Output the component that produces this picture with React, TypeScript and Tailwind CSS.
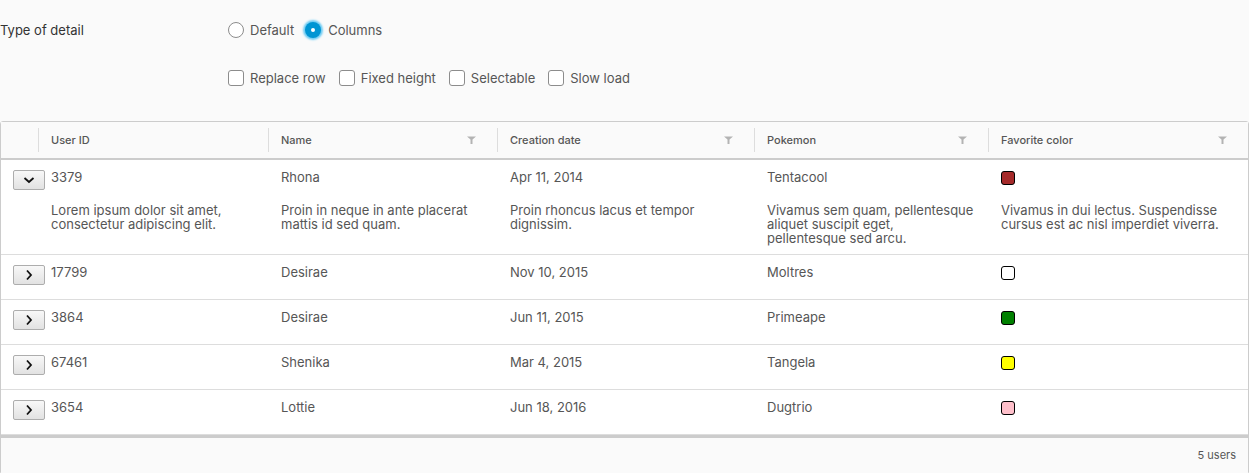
import { ReactNode } from "react";

type User = {
  id: string;
  name: string;
  date: string;
  pokemon: string;
  color: string;
  expanded?: boolean;
};

const users: User[] = [
  { id: "3379", name: "Rhona", date: "Apr 11, 2014", pokemon: "Tentacool", color: "bg-[#a52a2a]", expanded: true },
  { id: "17799", name: "Desirae", date: "Nov 10, 2015", pokemon: "Moltres", color: "bg-white" },
  { id: "3864", name: "Desirae", date: "Jun 11, 2015", pokemon: "Primeape", color: "bg-[#008000]" },
  { id: "67461", name: "Shenika", date: "Mar 4, 2015", pokemon: "Tangela", color: "bg-[#ffff00]" },
  { id: "3654", name: "Lottie", date: "Jun 18, 2016", pokemon: "Dugtrio", color: "bg-[#ffc0cb]" },
];

const details = [
  "Lorem ipsum dolor sit amet, consectetur adipiscing elit.",
  "Proin in neque in ante placerat mattis id sed quam.",
  "Proin rhoncus lacus et tempor dignissim.",
  "Vivamus sem quam, pellentesque aliquet suscipit eget, pellentesque sed arcu.",
  "Vivamus in dui lectus. Suspendisse cursus est ac nisl imperdiet viverra.",
];

const cols = "grid grid-cols-[37px_230px_229px_257px_234px_1fr]";

function FilterIcon() {
  return (
    <svg width="9" height="8" viewBox="0 0 9 8" className="shrink-0">
      <path d="M0 0.5h9L5.5 3.5V8h-2V3.5Z" fill="#b3b3b3" />
    </svg>
  );
}

function HeaderCell({ label, filter }: { label: string; filter?: boolean }) {
  return (
    <div className="flex items-center border-l border-[#ddd] my-[6px] pl-[12px] pr-[21px] justify-between h-[24px]">
      <span>{label}</span>
      {filter && <FilterIcon />}
    </div>
  );
}

function Cell({ children }: { children: ReactNode }) {
  return <div className="pl-[13px] pr-[12px]">{children}</div>;
}

function ExpandButton({ open }: { open?: boolean }) {
  return (
    <button className="ml-[12px] w-[32px] h-[20px] flex items-center justify-center rounded-[2px] border border-[#adadad] bg-gradient-to-b from-[#f8f8f8] to-[#e2e2e2]">
      <svg width="12" height="12" viewBox="0 0 12 12">
        {open ? (
          <path d="M1.5 4l4.5 4 4.5-4" fill="none" stroke="#111" strokeWidth="1.8" />
        ) : (
          <path d="M4 1.5l4 4.5-4 4.5" fill="none" stroke="#111" strokeWidth="1.8" />
        )}
      </svg>
    </button>
  );
}

export default function App() {
  return (
    <div className="w-[1249px] h-[473px] bg-[#fafafa] text-[13px] text-[#565656] font-['Inter',sans-serif] overflow-hidden">
      {/* Options */}
      <div className="flex pt-[22px] h-[121px]">
        <div className="w-[228px] text-[#333] leading-[16px]">Type of detail</div>
        <div className="flex flex-col gap-[32px]">
          <div className="flex items-center leading-[16px]">
            <span className="w-[16px] h-[16px] rounded-full border border-[#8c8c8c] bg-white" />
            <span className="ml-[6px]">Default</span>
            <span className="ml-[11px] w-[16px] h-[16px] rounded-full bg-[#0095d3] shadow-[0_0_2px_2px_#6ccbf3] flex items-center justify-center">
              <span className="w-[4px] h-[4px] rounded-full bg-white" />
            </span>
            <span className="ml-[7px]">Columns</span>
          </div>
          <div className="flex items-center gap-[13px] leading-[16px]">
            {["Replace row", "Fixed height", "Selectable", "Slow load"].map((l) => (
              <label key={l} className="flex items-center gap-[6px]">
                <span className="w-[16px] h-[16px] rounded-[3px] border border-[#8c8c8c] bg-white" />
                {l}
              </label>
            ))}
          </div>
        </div>
      </div>

      {/* Datagrid */}
      <div className="border border-[#ccc] rounded-t-[3px] w-[1249px] h-[352px] flex flex-col bg-white">
        <div className={`${cols} bg-[#fafafa] h-[38px] shrink-0 border-b-2 border-[#ccc] text-[11px] font-medium`}>
          <div />
          <HeaderCell label="User ID" />
          <HeaderCell label="Name" filter />
          <HeaderCell label="Creation date" filter />
          <HeaderCell label="Pokemon" filter />
          <HeaderCell label="Favorite color" filter />
        </div>

        <div className="flex-1">
          {users.map((u) => (
            <div key={u.id} className={`${cols} content-start border-b border-[#ddd] pt-[10px] leading-[14px] ${u.expanded ? "h-[95px]" : "h-[45px]"}`}>
              <div>
                <ExpandButton open={u.expanded} />
              </div>
              <Cell>{u.id}</Cell>
              <Cell>{u.name}</Cell>
              <Cell>{u.date}</Cell>
              <Cell>{u.pokemon}</Cell>
              <Cell>
                <span className={`block mt-[1px] w-[14px] h-[14px] rounded-[3px] border border-black ${u.color}`} />
              </Cell>
              {u.expanded && (
                <>
                  <div />
                  {details.map((d) => (
                    <div key={d} className="pl-[13px] pr-[12px] mt-[13px]">
                      {d}
                    </div>
                  ))}
                </>
              )}
            </div>
          ))}
        </div>

        <div className="border-t-[3px] border-[#ccc] bg-[#fafafa] h-[38px] shrink-0 flex items-center justify-end pr-[12px] text-[11px]">
          5 users
        </div>
      </div>
    </div>
  );
}
